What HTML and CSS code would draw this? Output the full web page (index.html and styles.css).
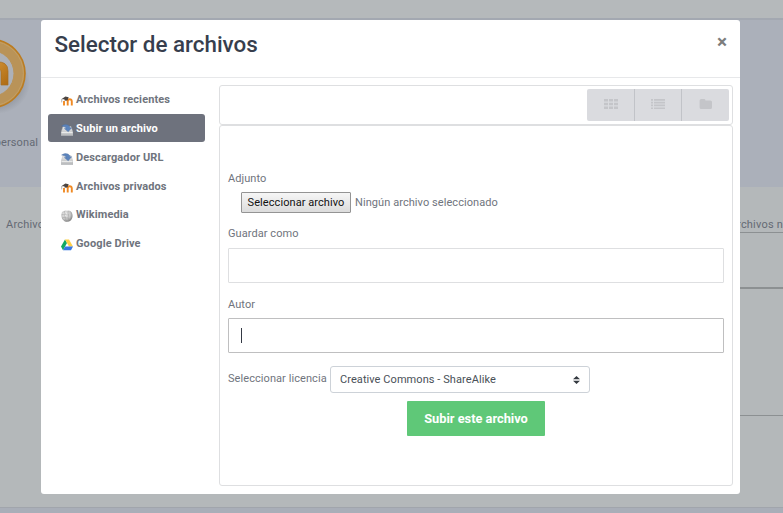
FILE: index.html
```html
<!DOCTYPE html>
<html lang="es">
<head>
<meta charset="utf-8">
<title>Selector de archivos</title>
<link rel="stylesheet" href="styles.css">
</head>
<body>
<svg class="defs" width="0" height="0" aria-hidden="true">
  <defs>
    <linearGradient id="tray" x1="0" y1="0" x2="0" y2="1"><stop offset="0" stop-color="#e9e9e9"/><stop offset="1" stop-color="#b5b7b9"/></linearGradient>
    <linearGradient id="orange" x1="0" y1="0" x2="1" y2="1"><stop offset="0" stop-color="#d8993a"/><stop offset="1" stop-color="#ad6a12"/></linearGradient>
    <radialGradient id="globe" cx=".4" cy=".35" r=".7"><stop offset="0" stop-color="#f3f3f3"/><stop offset=".6" stop-color="#c4c4c4"/><stop offset="1" stop-color="#777"/></radialGradient>
    <radialGradient id="shade"><stop offset=".65" stop-color="#7c8188"/><stop offset="1" stop-color="#7c8188" stop-opacity="0"/></radialGradient>
    <symbol id="moodle" viewBox="0 0 12 12">
      <path d="M3 10.6V6M6.7 10.6V6.6Q6.7 4.4 5 4.8M6.7 6.6Q6.7 4.3 8.7 4.3T10.8 6.5V10.6" fill="none" stroke="#f08a24" stroke-width="1.9"/>
      <path d="M.3 4.2L4.4 1.4L7.7 2.3L6.6 5.3L3.8 5.7L3.3 4.2Z" fill="#4b4542"/>
      <path d="M.7 4.2V7.4" stroke="#8c857f" stroke-width=".6"/>
    </symbol>
    <symbol id="download" viewBox="0 0 12 12">
      <path d="M2 2.5H10L12 8.2V11.7H.1V8.2Z" fill="url(#tray)" stroke="#b4b7ba" stroke-width=".4"/>
      <path d="M.5 8.6H11.6" stroke="#f6f6f6" stroke-width=".8"/>
      <path d="M.6 2Q3.5-.5 7 1Q8.8 2 9 3.8H10.6L7.2 7.8L3.4 4.6H5.1Q4.3 2.4 .6 2Z" fill="#5c84bc" stroke="#4d70a3" stroke-width=".4"/>
    </symbol>
    <symbol id="wiki" viewBox="0 0 12 12">
      <path d="M1 2Q3.5-.2 6 .7Q9-.2 10.8 2.5Q12.7 7 10 10.2Q7 12.7 3.5 11.2Q-.8 8 .5 4Z" fill="url(#globe)"/>
      <path d="M3.6 1.1Q2.9 2.7 4.1 3.8Q3 5.2 4.1 7Q4 9 5.8 11.5M7.3 1Q6.3 3.2 7.6 4.9Q6.5 7 8 10.8M.7 4.5Q2.2 5.1 4 4.1Q6 5.5 7.5 4.8M1 8Q2.7 7.2 4.2 7.4Q6 8.6 7.5 8" fill="none" stroke="#999" stroke-width=".45"/>
    </symbol>
    <symbol id="drive" viewBox="0 0 12 11">
      <path d="M4 0L6 3.5L2 10.7L0 7.1Z" fill="#11a861"/>
      <path d="M4 0H8L12 7.1H8Z" fill="#ffcf48"/>
      <path d="M4.1 7.1H12L10 10.7H2Z" fill="#3777e3"/>
    </symbol>
  </defs>
</svg>

<div class="page">
  <div class="topbar"></div>
  <div class="banner">
    <svg class="medal" width="32" height="82" viewBox="0 0 32 82" aria-hidden="true">
      <ellipse cx="-4" cy="46" rx="34" ry="31" fill="url(#shade)" opacity=".55"/>
      <circle cx="-9" cy="36.5" r="34" fill="#b99358" stroke="#bc7c20" stroke-width="1.6"/>
      <circle cx="-9" cy="36.5" r="32.4" fill="none" stroke="#c59f62" stroke-width="1"/>
      <circle cx="-9" cy="36.5" r="23" fill="#adb1b8" stroke="#b99358"/>
      <path d="M-14 48V32Q-12 25-4 25Q8 24 8 34V48H1V35Q1 31-4 32V48Z" fill="url(#orange)" stroke="#a86d20" stroke-width=".7"/>
    </svg>
    <span class="banner-label">personal</span>
  </div>
  <div class="content">
    <span class="bg-left">Archivos</span>
    <div class="bg-right">
      <div class="bg-row">Archivos n</div>
      <div class="bg-head"></div>
      <div class="bg-drop"></div>
    </div>
  </div>
  <div class="footer"></div>
</div>

<div class="modal" role="dialog">
  <header class="modal-header">
    <h3 class="title">Selector de archivos</h3>
    <button class="close" aria-label="Cerrar">×</button>
  </header>
  <div class="modal-body">
    <nav class="repos">
      <a class="repo"><svg><use href="#moodle"/></svg><span>Archivos recientes</span></a>
      <a class="repo active"><svg><use href="#download"/></svg><span>Subir un archivo</span></a>
      <a class="repo"><svg><use href="#download"/></svg><span>Descargador URL</span></a>
      <a class="repo tight"><svg><use href="#moodle"/></svg><span>Archivos privados</span></a>
      <a class="repo"><svg><use href="#wiki"/></svg><span>Wikimedia</span></a>
      <a class="repo"><svg><use href="#drive"/></svg><span>Google Drive</span></a>
    </nav>
    <main class="panel">
      <div class="toolbar">
        <div class="views">
          <span class="view"><svg width="14" height="12" viewBox="0 0 14 12"><path d="M0 1h4v2.6H0zM5 1h4v2.6H5zM10 1h4v2.6h-4zM0 4.7h4v2.6H0zM5 4.7h4v2.6H5zM10 4.7h4v2.6h-4zM0 8.4h4V11H0zM5 8.4h4V11H5zM10 8.4h4V11h-4z"/></svg></span>
          <span class="view"><svg width="14" height="12" viewBox="0 0 14 12"><path d="M0 1h2v1.7H0zM3 1h11v1.7H3zM0 3.8h2v1.7H0zM3 3.8h11v1.7H3zM0 6.6h2v1.7H0zM3 6.6h11v1.7H3zM0 9.4h2v1.7H0zM3 9.4h11v1.7H3z"/></svg></span>
          <span class="view"><svg width="14" height="12" viewBox="0 0 14 12"><path d="M2.3 1h2.8q1.3 0 1.3 1.3v.2h4.9q1.7 0 1.7 1.6v5.3q0 1.6-1.6 1.6H2.2Q.6 11 .6 9.4V2.6Q.6 1 2.3 1z"/></svg></span>
        </div>
      </div>
      <form class="upload">
        <div class="label">Adjunto</div>
        <div class="file"><span class="file-btn">Seleccionar archivo</span><span class="file-name">Ningún archivo seleccionado</span></div>
        <div class="label save">Guardar como</div>
        <div class="input"></div>
        <div class="label author">Autor</div>
        <div class="input focused"><span class="caret"></span></div>
        <div class="license">
          <span class="license-label">Seleccionar licencia</span>
          <div class="select"><span>Creative Commons - ShareAlike</span><svg width="7" height="8" viewBox="0 0 7 8"><path d="M0 3.3L3.5 0L7 3.3zM0 4.7h7L3.5 8z" fill="#343a40"/></svg></div>
        </div>
        <button type="button" class="submit">Subir este archivo</button>
      </form>
    </main>
  </div>
</div>
</body>
</html>
```

FILE: styles.css
```css
* { box-sizing: border-box; }
body {
  margin: 0;
  width: 783px;
  height: 513px;
  overflow: hidden;
  position: relative;
  font: 11px/16px Roboto, sans-serif;
  letter-spacing: .07px;
  color: #6f747d;
}
.defs { position: absolute; }

.page { height: 513px; background: #b4b8ba; color: #656a74; overflow: hidden; }
.topbar { height: 18px; background: #b5b9bb; }
.banner { height: 169px; background: #abb0ba; border-top: 2px solid #a3a8b1; padding-top: 17px; }
.medal { display: block; }
.banner-label { display: flex; justify-content: flex-end; width: 38px; margin-top: 16px; white-space: nowrap; letter-spacing: .1px; }
.content { height: 320px; display: flex; justify-content: space-between; padding-left: 6px; }
.bg-left { padding-top: 30px; letter-spacing: .2px; }
.bg-right { width: 53px; padding-top: 29px; }
.bg-row { display: flex; justify-content: flex-end; height: 17px; padding-top: 1px; border-bottom: 1px solid #8c9092; white-space: nowrap; letter-spacing: .2px; }
.bg-head { height: 56px; border-bottom: 2px solid #8c9092; }
.bg-drop { height: 127px; border-bottom: 1px solid #8c9092; }
.footer { height: 6px; background: #a9aeb8; border-top: 1px solid #a1a5ac; }

.modal { position: absolute; left: 41px; top: 20px; width: 699px; height: 474px; background: #fff; border-radius: 3px; }
.modal-header { height: 58px; border-bottom: 1px solid #e7e8ea; display: flex; justify-content: space-between; padding: 9px 13px 0 13.5px; }
.title { margin: 0; font-size: 22.4px; line-height: 30px; font-weight: 500; letter-spacing: 0; color: #373e4d; }
.close { border: 0; padding: 0; background: none; color: #7d7d7d; font: 700 19px/24px Roboto, sans-serif; height: 24px; margin-top: 1px; }
.modal-body { display: flex; padding: 7px; gap: 14px; }
.repos { width: 157px; }
.repo { display: flex; align-items: center; gap: 3px; height: 28px; margin-bottom: 1px; padding: 1px 0 0 13px; border-radius: 3px; font-weight: 700; letter-spacing: .11px; }
.repo svg { width: 12px; height: 12px; margin-top: 2px; }
.repo.active { background: #6e727d; color: #fff; }
.repo.tight { margin-bottom: 0; }

.panel { width: 514px; }
.toolbar { height: 40px; border: 1px solid #dedfe1; border-radius: 3px; display: flex; justify-content: flex-end; padding: 3px; }
.views { display: grid; grid-template-columns: 47px 47px 48px; width: 142px; height: 32px; background: #dadbdf; border-radius: 2px; }
.view { display: flex; align-items: center; justify-content: center; padding: 0 0 2px 1px; }
.view + .view { border-left: 1px solid #c1c3c8; padding-left: 0; }
.view svg { fill: #c4c5c9; }
.upload { height: 361px; border: 1px solid #dedfe1; border-radius: 3px; padding: 45px 8px 0; display: flex; flex-direction: column; }
.label { height: 16px; }
.file { display: flex; align-items: center; gap: 4px; height: 21px; margin: 5px 0 0 13px; }
.file-btn { width: 110px; height: 21px; border: 1px solid #949494; border-radius: 1px; background: linear-gradient(#f6f6f6, #dcdcdc); color: #111; text-align: center; line-height: 19px; white-space: nowrap; }
.save { margin-top: 13px; }
.input { height: 35px; margin-top: 6px; border: 1px solid #dedfe1; border-radius: 1px; padding: 9px 12px; }
.author { margin-top: 14px; }
.author + .input { margin-top: 5px; }
.input.focused { border-color: #bfbfc0; }
.caret { display: block; width: 1px; height: 15px; background: #343944; }
.license { display: flex; margin-top: 13px; justify-content: space-between; width: 362px; }
.license-label { padding-top: 5px; }
.select { width: 260px; height: 27px; border: 1px solid #cdd2d8; border-radius: 3px; display: flex; align-items: center; justify-content: space-between; padding: 0 9px 0 9px; color: #495057; }
.submit { align-self: center; width: 138px; height: 35px; margin-top: 8px; border: 0; border-radius: 1px; background: #5fc878; color: #fff; font: 700 12.8px/35px Roboto, sans-serif; padding: 0; }
```
